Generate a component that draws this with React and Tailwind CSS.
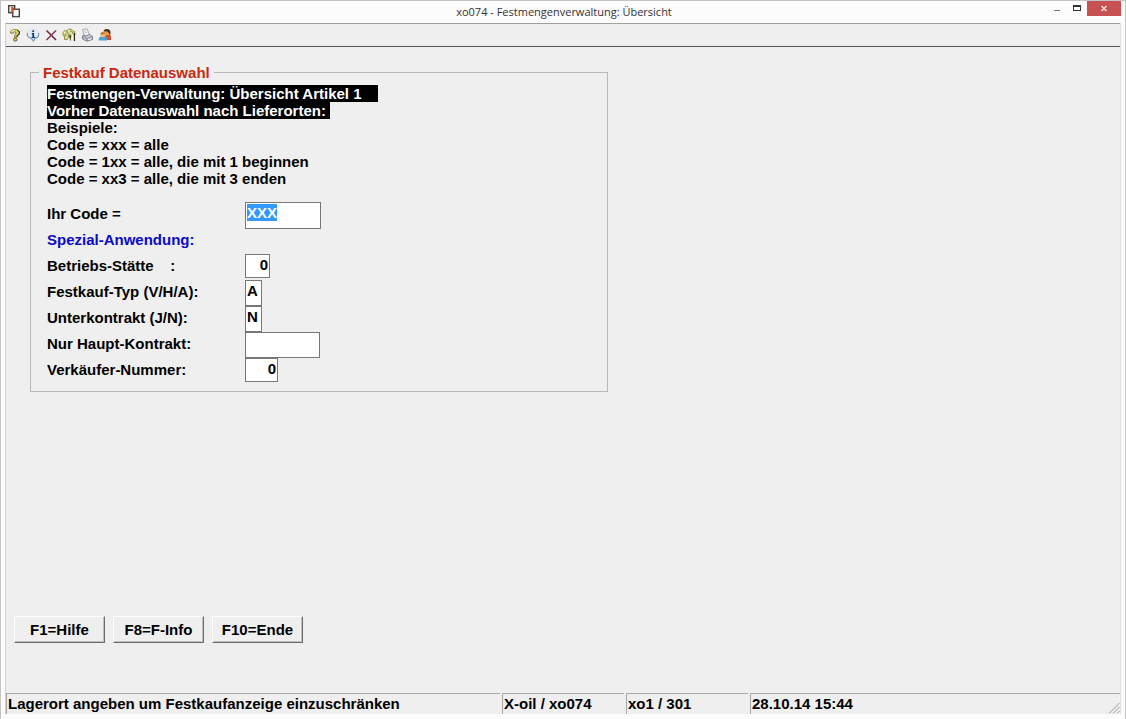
import { useEffect, useRef } from "react";

function AppIcon() {
  return (
    <svg width="14" height="14" viewBox="0 0 14 14" fill="none" aria-hidden="true">
      <rect x="1.700" y="1.700" width="6" height="7" fill="#efe6e4" stroke="#4d4545" strokeWidth="1.400" />
      <path d="M4.500 2.500v5.500" stroke="#c58a78" />
      <rect x="5.700" y="5.200" width="6.600" height="7.400" fill="#fdfdfd" stroke="#4a4444" strokeWidth="1.400" />
      <path d="M5.600 3v6" stroke="#b8452c" strokeWidth="1.300" />
      <path d="M5 5.200h3.500" stroke="#b8452c" strokeWidth="1.300" />
    </svg>
  );
}

function HelpIcon() {
  return (
    <svg width="14" height="14" viewBox="0 0 14 14" fill="none" aria-hidden="true">
      <path d="M2.500 5c-.3-2 1.500-3.400 4.300-3.400S11.500 2.600 11.500 5c0 2-2.600 2.400-2.800 4.200H6.300C6.300 7 8 6.500 8 5c0-.8-.5-1.200-1.200-1.200-.9 0-1.300.5-1.300 1.400z" fill="#dcd56c" stroke="#77722f" strokeWidth=".9" />
      <path d="M9.500 2.200c2.600 1 2.400 3.800.6 4.800-.8.500-1.200 1.200-1.300 2.200" stroke="#3c3a1c" strokeWidth="1.200" />
      <path d="M3.600 3.600C4.300 2.600 5.500 2.300 7 2.400" stroke="#faf7b8" />
      <ellipse cx="7.300" cy="11.600" rx="1.800" ry="1.500" fill="#d8d060" stroke="#55512a" strokeWidth=".9" />
    </svg>
  );
}

function InfoIcon() {
  return (
    <svg width="14" height="14" viewBox="0 0 14 14" fill="none" aria-hidden="true">
      <path d="M7 1.800c3.500 0 5.800 1.800 5.800 4.500 0 2.200-1.800 3.700-4 4.300L7.400 13l-1.700-2.400C3 10.200 1.200 8.700 1.200 6.300 1.200 3.600 3.500 1.800 7 1.800z" fill="#e3eef5" stroke="#cfd9df" strokeWidth=".8" />
      <path d="M1.600 4.800c-.7 2.500.6 4.700 3.800 5.600L7.400 13l1.500-2.500c3-.8 4.500-2.900 3.700-5.600" stroke="#6d97b5" strokeWidth="1.100" />
      <path d="M5.800 5.600h1.600v3.900M5.600 9.500h3.600" stroke="#17385c" strokeWidth="1.200" />
      <path d="M7.300 5v4.500" stroke="#17385c" strokeWidth="1.600" />
      <circle cx="7.200" cy="3.300" r="1" fill="#17385c" />
    </svg>
  );
}

function CancelIcon() {
  return (
    <svg width="14" height="14" viewBox="0 0 14 14" fill="none" aria-hidden="true">
      <path d="M2.500 2.500l9.500 9.500" stroke="#6b2c40" strokeWidth="1.600" />
      <path d="M12 2.500L2.500 12" stroke="#8a3a52" strokeWidth="1.600" />
    </svg>
  );
}

function KeysIcon() {
  return (
    <svg width="14" height="14" viewBox="0 0 14 14" fill="none" aria-hidden="true">
      <path d="M.8 4.500L3 2.500l2 .3L6.500 1l3 .4 1.300 1.300 2 1v3.500L10 8.500 7.500 8l-2 1.500-3-.5L1 7z" fill="#c6cb76" stroke="#858945" strokeWidth=".8" />
      <path d="M2 5l2-1.200M6 3.200l2-1M4.500 6.500l2-1.500M8 5.500l2-1.500" stroke="#fafade" strokeWidth="1.100" />
      <path d="M4 3l3 4M2.500 7.500l2-1M8.500 3l2.500 2" stroke="#72762f" strokeWidth=".8" />
      <path d="M2.500 8.500v3h2.800l1.500-3.500" fill="#dfe2a0" stroke="#85893f" strokeWidth=".9" />
      <path d="M7 7l2 5.500" stroke="#6d702e" strokeWidth="1.300" />
      <path d="M9 6.500h2.800v6.500H9.300z" fill="#f8f8ec" />
      <path d="M12.400 5v8" stroke="#2d2d20" strokeWidth="1.300" />
      <path d="M8.700 7v3" stroke="#3a3a22" />
    </svg>
  );
}

function PrinterIcon() {
  return (
    <svg width="14" height="14" viewBox="0 0 14 14" fill="none" aria-hidden="true">
      <path d="M2.500 1.500l4.500-.7L9 5.500l1 1.500-5.500 1.500z" fill="#fbfbfc" stroke="#9a9fa8" strokeWidth=".9" />
      <path d="M4 3.300l2.500-.5M4.600 5l2.800-.6" stroke="#adb2bc" strokeWidth=".8" />
      <path d="M2.500 8l2-1 .5 1.200L9.500 6.500l3 2v3L7 13.200 2.500 11z" fill="#c8cad1" stroke="#757a84" strokeWidth=".9" />
      <path d="M2.700 8.500L7 10.600l5.300-2M7 10.600v2.400" stroke="#757a84" strokeWidth=".8" />
      <path d="M8.200 11.600l3-1" stroke="#f8f8f8" />
    </svg>
  );
}

function UsersIcon() {
  return (
    <svg width="14" height="14" viewBox="0 0 14 14" fill="none" aria-hidden="true">
      <path d="M7 12V8.500C7 7 8.500 6 10.200 6S13 7 13 9v3z" fill="#c9503a" />
      <circle cx="8.600" cy="4.400" r="2.900" fill="#e9a045" />
      <path d="M5.300 3.500C5.800 1.500 7.300.8 9 .9c2.300.1 3.900 1.700 3.600 4.400L11.500 7C11.200 4.600 9.500 3.300 7.800 3.300z" fill="#45301f" />
      <path d="M.8 12.500v-1.700c0-1.600 1.700-2.500 3.900-2.500S9 9.200 9 10.800v1.700z" fill="#4ba3d3" />
      <circle cx="4.800" cy="6.900" r="2.300" fill="#f2b961" />
      <path d="M2.300 6.500C2.400 4.900 3.600 4.100 5 4.300c1.100.1 1.800.7 2 1.500z" fill="#a3682c" />
    </svg>
  );
}

const TOOLS = [
  { label: "Hilfe", Icon: HelpIcon },
  { label: "Info", Icon: InfoIcon },
  { label: "Abbrechen", Icon: CancelIcon },
  { label: "Schlüssel", Icon: KeysIcon },
  { label: "Drucken", Icon: PrinterIcon },
  { label: "Benutzer", Icon: UsersIcon },
];

function TitleBar() {
  return (
    <header className="grid h-[22px] grid-cols-[1fr_auto_1fr] items-start bg-[#fcfcfc] pl-[6px] pr-1">
      <div className="pt-[3px]">
        <AppIcon />
      </div>
      <h1 className="pt-[3px] font-['Open_Sans',sans-serif] text-[11px] leading-4 text-[#333]">
        xo074 - Festmengenverwaltung: Übersicht
      </h1>
      <div className="flex justify-end">
        <button aria-label="Minimieren" className="flex h-[15px] w-5 justify-center">
          <svg width="20" height="15" viewBox="0 0 20 15" aria-hidden="true">
            <rect x="7" y="9" width="6" height="1" fill="#777" />
          </svg>
        </button>
        <button aria-label="Maximieren" className="flex h-[15px] w-5 justify-center">
          <svg width="20" height="15" viewBox="0 0 20 15" fill="none" aria-hidden="true">
            <rect x="6.500" y="4.500" width="7" height="5" stroke="#333" />
            <path d="M6 5h8" stroke="#333" strokeWidth="2" />
          </svg>
        </button>
        <button aria-label="Schließen" className="flex h-[15px] w-[34px] justify-center bg-[#c75050]">
          <svg width="34" height="15" viewBox="0 0 34 15" fill="none" aria-hidden="true">
            <path d="M14.500 5l5 5M19.500 5l-5 5" stroke="#f6e4e4" strokeWidth="1.500" />
          </svg>
        </button>
      </div>
    </header>
  );
}

function Toolbar() {
  return (
    <div role="toolbar" aria-label="Werkzeuge" className="flex h-6 items-center border-t border-b border-t-[#a0a0a0] border-b-[#555]">
      {TOOLS.map(({ label, Icon }) => (
        <button key={label} aria-label={label} className="flex h-4 w-[18px] items-center justify-center">
          <Icon />
        </button>
      ))}
    </div>
  );
}

const FIELD = "self-start border border-[#777] bg-white px-[1px] pt-[1px] leading-[17px] outline-none selection:bg-[#3399ff] selection:text-white";

function Row({ id, label, children }) {
  return (
    <div className="flex h-[26px] items-center">
      <label htmlFor={id} className="w-[198px] pb-[2px] leading-6 whitespace-pre">
        {label}
      </label>
      {children}
    </div>
  );
}

function SelectionForm() {
  const codeRef = useRef(null);

  useEffect(() => {
    codeRef.current.focus();
    codeRef.current.select();
  }, []);

  return (
    <fieldset className="w-full max-w-[578px] border border-[#b8b8b8] px-4 pt-1 pb-[7px]">
      <legend className="-ml-2 px-1 leading-[17px] text-[#c8290f]">Festkauf Datenauswahl</legend>
      <div className="flex flex-col items-start leading-[17px]">
        <p className="bg-black pr-4 text-white">Festmengen-Verwaltung: Übersicht Artikel 1</p>
        <p className="bg-black pr-1 text-white">Vorher Datenauswahl nach Lieferorten:</p>
        <p>Beispiele:</p>
        <p>Code = xxx = alle</p>
        <p>Code = 1xx = alle, die mit 1 beginnen</p>
        <p>Code = xx3 = alle, die mit 3 enden</p>
      </div>
      <div className="mt-[15px]">
        <Row id="code" label="Ihr Code =">
          <input id="code" ref={codeRef} defaultValue="XXX" className={`${FIELD} h-[27px] w-[76px] pb-[7px]`} />
        </Row>
        <p className="h-[26px] leading-6 text-[#0a0ac8]">Spezial-Anwendung:</p>
        <Row id="site" label={"Betriebs-Stätte    :"}>
          <input id="site" defaultValue="0" className={`${FIELD} h-6 w-[25px] pb-1 text-right`} />
        </Row>
        <Row id="type" label="Festkauf-Typ (V/H/A):">
          <input id="type" defaultValue="A" className={`${FIELD} h-[26px] w-[17px] pb-[6px]`} />
        </Row>
        <Row id="sub" label="Unterkontrakt (J/N):">
          <input id="sub" defaultValue="N" className={`${FIELD} h-[26px] w-[17px] pb-[6px]`} />
        </Row>
        <Row id="main" label="Nur Haupt-Kontrakt:">
          <input id="main" defaultValue="" className={`${FIELD} h-[26px] w-[75px] pb-[6px]`} />
        </Row>
        <Row id="seller" label="Verkäufer-Nummer:">
          <input id="seller" defaultValue="0" className={`${FIELD} h-6 w-[33px] pb-1 text-right`} />
        </Row>
      </div>
    </fieldset>
  );
}

function StatusCell({ children }) {
  return (
    <div className="truncate border-t border-l border-[#a8a8a8] pl-[1px] leading-5">{children}</div>
  );
}

export default function App() {
  return (
    <div className="flex min-h-screen flex-col border-x border-t border-[#c4c4c4] bg-[#fcfcfc] font-['Liberation_Sans',Arial,sans-serif] text-[15px] font-bold text-black">
      <div className="font-normal">
        <TitleBar />
      </div>
      <div className="mr-1 mb-[5px] ml-1 flex flex-1 flex-col border-x border-l-[#d0d0d0] border-r-[#e0e0e0] bg-[#efefef]">
        <Toolbar />
        <main className="flex flex-1 flex-col pt-[17px] pl-6">
          <SelectionForm />
          <div className="mt-auto -ml-4 flex gap-2 pb-[50px]">
            {["F1=Hilfe", "F8=F-Info", "F10=Ende"].map((label) => (
              <button
                key={label}
                className="h-[27px] w-[91px] border border-t-white border-r-[#6c6c6c] border-b-[#6c6c6c] border-l-white bg-[#efefef] leading-[25px] shadow-[inset_-1px_-1px_0_#c0c0c0]"
              >
                {label}
              </button>
            ))}
          </div>
        </main>
        <footer className="relative grid h-[21px] grid-cols-[494fr_122fr_122fr_370fr] gap-[2px]">
          <StatusCell>Lagerort angeben um Festkaufanzeige einzuschränken</StatusCell>
          <StatusCell>X-oil / xo074</StatusCell>
          <StatusCell>xo1 / 301</StatusCell>
          <StatusCell>28.10.14 15:44</StatusCell>
          <svg className="absolute right-0 bottom-0" width="12" height="12" viewBox="0 0 12 12" fill="none" aria-hidden="true">
            <path d="M1 11.500L11.500 1M5 11.500L11.500 5M9 11.500L11.500 9" stroke="#999" />
          </svg>
        </footer>
      </div>
    </div>
  );
}
